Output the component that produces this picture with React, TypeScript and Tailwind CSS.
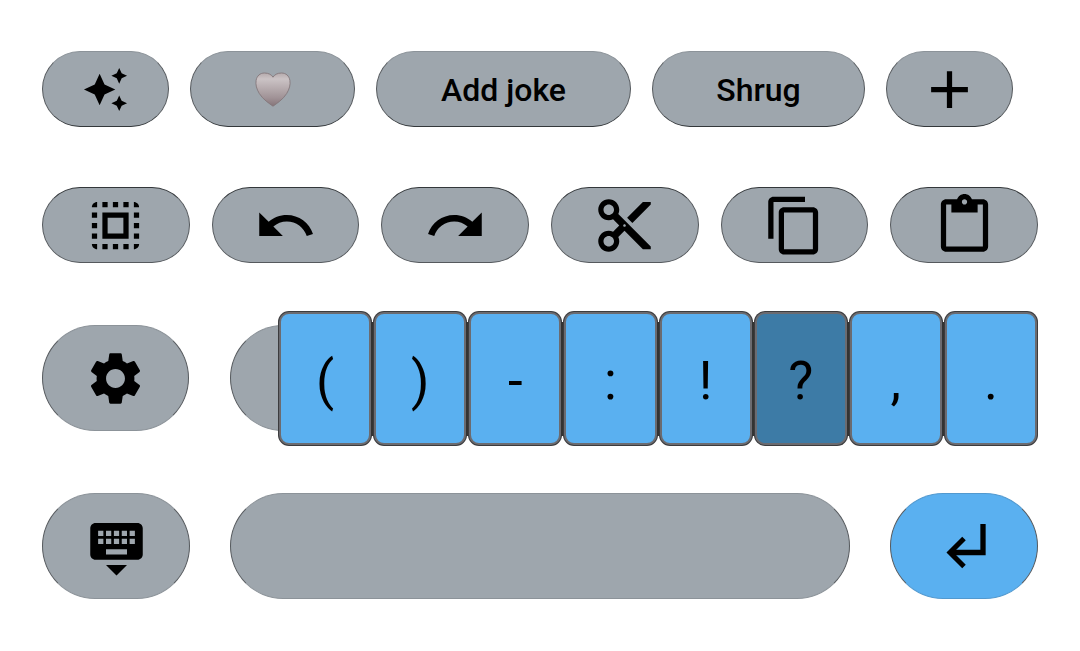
import { Fragment, type ReactNode } from 'react';
import {
  MdAdd,
  MdAutoAwesome,
  MdContentCopy,
  MdContentCut,
  MdContentPaste,
  MdKeyboardHide,
  MdRedo,
  MdSelectAll,
  MdSettings,
  MdUndo,
} from 'react-icons/md';

type KeyProps = {
  label?: string;
  className: string;
  children?: ReactNode;
};

function Key({ label, className, children }: KeyProps) {
  return (
    <button
      type="button"
      aria-label={label}
      className={`flex items-center justify-center rounded-full border text-black ${className}`}
    >
      {children}
    </button>
  );
}

const chip =
  'h-[76px] shrink-0 bg-[#9ea6ad] border-[#55595d] border-t-[#8c9399] border-b-[#33373a] text-[32px] font-medium';
const editKey = 'h-[76px] bg-[#9ea6ad] border-[#55595d] border-t-[#33373a]';
const largeKey = 'h-[106px] border-x-[#55595d]';
const grayKey = 'bg-[#9ea6ad] border-y-[#8c9399]';

function Heart() {
  return (
    <svg viewBox="0 0 36 35" className="h-[35px] w-9" aria-hidden="true">
      <defs>
        <linearGradient id="heart-fill" x1="0" y1="0" x2="0" y2="1">
          <stop offset="0" stopColor="#b5aaac" />
          <stop offset="0.18" stopColor="#cbc3c5" />
          <stop offset="0.5" stopColor="#b3a8ab" />
          <stop offset="0.75" stopColor="#a09296" />
          <stop offset="1" stopColor="#857479" />
        </linearGradient>
      </defs>
      <path
        d="M18 34.2C14.5 31.6 8 27.6 4.3 21.5C1.6 17 0.4 12.8 1.1 8.4C1.9 3.9 5 1 9.5 1C13.7 1 16.6 2.8 18 5.2C19.4 2.8 22.3 1 26.5 1C31 1 34.1 3.9 34.9 8.4C35.6 12.8 34.4 17 31.7 21.5C28 27.6 21.5 31.6 18 34.2Z"
        fill="url(#heart-fill)"
        stroke="#83777b"
        strokeWidth="0.9"
      />
    </svg>
  );
}

function EnterArrow() {
  return (
    <svg viewBox="0 0 40 46" className="h-[46px] w-10" fill="none" stroke="currentColor" aria-hidden="true">
      <path d="M37 1V29.5H4" strokeWidth="5.3" />
      <path d="M18 15.5L4 29.5L18 43.5" strokeWidth="5" />
    </svg>
  );
}

const editKeys = [
  { label: 'Select all', Icon: MdSelectAll },
  { label: 'Undo', Icon: MdUndo },
  { label: 'Redo', Icon: MdRedo },
  { label: 'Cut', Icon: MdContentCut },
  { label: 'Copy', Icon: MdContentCopy },
  { label: 'Paste', Icon: MdContentPaste },
];

const symbols = ['(', ')', '-', ':', '!', '?', ',', '.'];

export default function App() {
  return (
    <main className="flex flex-col bg-white px-[42px] pt-[51px] pb-[51px] font-['Roboto',sans-serif]">
      <div className="flex gap-[21px]">
        <Key label="Suggestions" className={`${chip} w-[127px]`}>
          <MdAutoAwesome className="size-[47px]" />
        </Key>
        <Key label="Heart" className={`${chip} w-[165px]`}>
          <Heart />
        </Key>
        <Key className={`${chip} w-[255px] pt-[2px]`}>Add joke</Key>
        <Key className={`${chip} w-[213px] pt-[2px]`}>Shrug</Key>
        <Key label="Add shortcut" className={`${chip} w-[127px]`}>
          <MdAdd className="size-[63px]" />
        </Key>
      </div>

      <div className="mt-[60px] grid grid-cols-6 gap-[22px]">
        {editKeys.map(({ label, Icon }) => (
          <Key key={label} label={label} className={editKey}>
            <Icon className="size-[63px] shrink-0" />
          </Key>
        ))}
      </div>

      <div className="mt-[62px] flex gap-[41px]">
        <Key label="Settings" className={`${largeKey} ${grayKey} w-[147px] shrink-0`}>
          <MdSettings className="size-[63px]" />
        </Key>
        <div className="relative flex flex-1">
          <Key label="Punctuation" className={`${largeKey} ${grayKey} flex-1`} />
          <div className="absolute -top-[13px] right-px left-[49px] flex h-[133px] items-center">
            {symbols.map((symbol, index) => (
              <Fragment key={symbol}>
                {index > 0 && <span className="h-[114px] w-[3px] shrink-0 bg-[#333333]" />}
                <button
                  type="button"
                  className={`h-full min-w-0 flex-1 rounded-[10px] border-2 border-[#6b6b70] pt-[5px] text-[53px] leading-none text-black ring-1 ring-[#3c3c3e] ${
                    symbol === '?' ? 'bg-[#3d7ba6]' : 'bg-[#5ab0f0]'
                  }`}
                >
                  {symbol}
                </button>
              </Fragment>
            ))}
          </div>
        </div>
      </div>

      <div className="mt-[62px] flex gap-10">
        <Key label="Hide keyboard" className={`${largeKey} ${grayKey} w-[148px] shrink-0`}>
          <MdKeyboardHide className="size-[63px]" />
        </Key>
        <Key label="Space" className={`${largeKey} ${grayKey} flex-1`} />
        <Key label="Enter" className={`${largeKey} w-[148px] shrink-0 border-y-[#5299cf] bg-[#5ab0f0] pl-1`}>
          <EnterArrow />
        </Key>
      </div>
    </main>
  );
}
